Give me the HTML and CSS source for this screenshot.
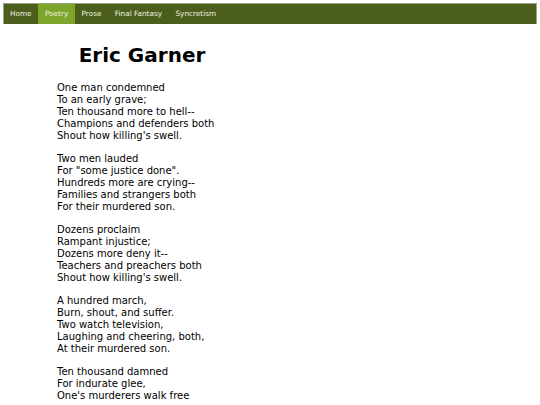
FILE: index.html
```html
<!DOCTYPE html>
<html>
<head>
<meta charset="utf-8">
<link rel="stylesheet" href="styles.css">
</head>
<body>
<nav class="nav">
  <a class="nav-item" href="#">Home</a>
  <a class="nav-item active" href="#">Poetry</a>
  <a class="nav-item" href="#">Prose</a>
  <a class="nav-item" href="#">Final Fantasy</a>
  <a class="nav-item" href="#">Syncretism</a>
</nav>
<main class="content">
  <h1 class="title">Eric Garner</h1>
  <div class="poem">
    <p class="stanza">One man condemned<br>To an early grave;<br>Ten thousand more to hell--<br>Champions and defenders both<br>Shout how killing's swell.</p>
    <p class="stanza">Two men lauded<br>For "some justice done".<br>Hundreds more are crying--<br>Families and strangers both<br>For their murdered son.</p>
    <p class="stanza">Dozens proclaim<br>Rampant injustice;<br>Dozens more deny it--<br>Teachers and preachers both<br>Shout how killing's swell.</p>
    <p class="stanza">A hundred march,<br>Burn, shout, and suffer.<br>Two watch television,<br>Laughing and cheering, both,<br>At their murdered son.</p>
    <p class="stanza">Ten thousand damned<br>For indurate glee,<br>One's murderers walk free</p>
  </div>
</main>
</body>
</html>
```
FILE: styles.css
```css
html, body { margin: 0; padding: 0; background: #fff; overflow: hidden; }
body { padding: 3px; font-family: "DejaVu Sans", Verdana, sans-serif; color: #000; }
.nav {
  display: flex;
  height: 20px;
  background: #4b5e1b;
  border: 1px solid #9aa487;
  border-bottom: none;
}
.nav-item {
  display: block;
  color: #eef2e2;
  text-decoration: none;
  font-size: 7.3px;
  line-height: 20px;
  padding: 0 6.7px;
}
.nav-item:first-child { padding-left: 6px; }
.nav-item.active { background: #7ba52b; }
.content { width: 278px; }
.title {
  text-align: center;
  font-size: 20px;
  font-weight: bold;
  margin: 19px 0 15px 0;
  line-height: 24px;
}
.poem { padding-left: 54px; font-size: 10px; line-height: 12px; }
.stanza { margin: 0 0 11px 0; }
```
